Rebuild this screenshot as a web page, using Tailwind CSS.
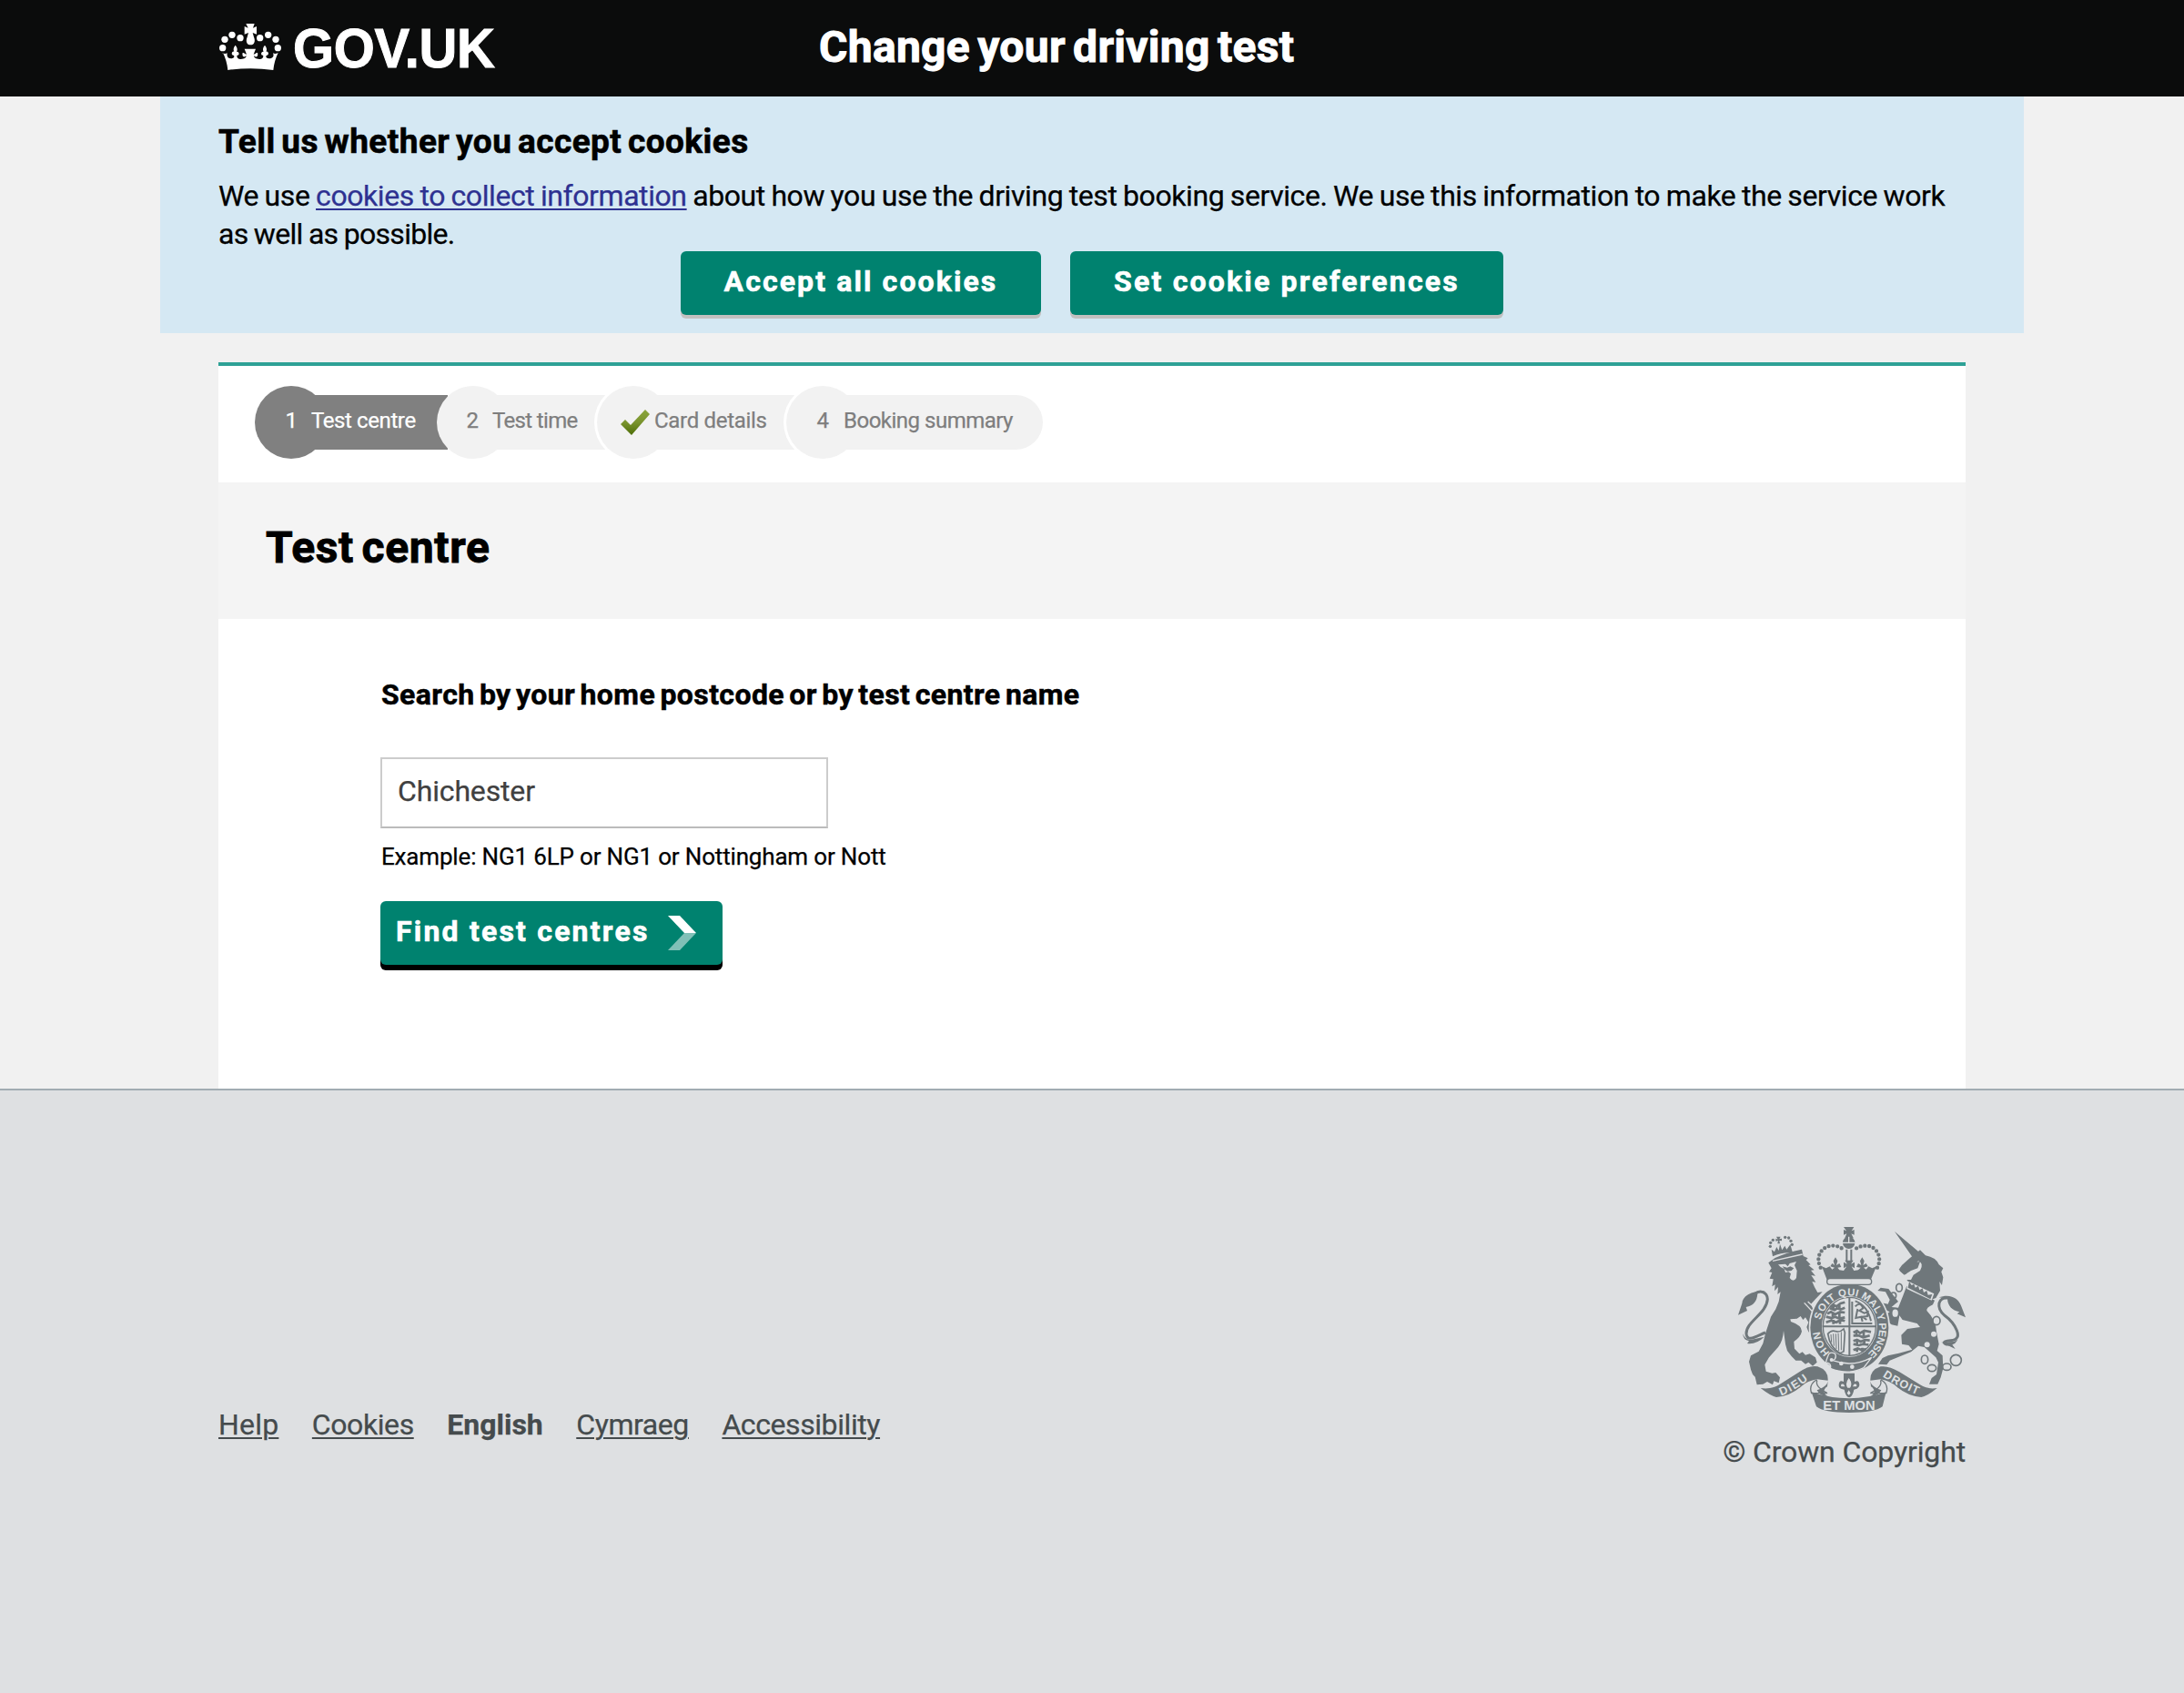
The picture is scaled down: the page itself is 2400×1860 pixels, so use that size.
<!DOCTYPE html>
<html lang="en">
<head>
<meta charset="utf-8">
<title>Change your driving test</title>
<script src="https://cdn.jsdelivr.net/npm/@tailwindcss/browser@4"></script>
</head>
<body class="bg-[#f1f1f1] font-['Roboto',sans-serif] text-black text-[32px] leading-[42px] [-webkit-text-stroke:0.25px]">

<header class="h-[106px] bg-[#0b0c0c] px-60 flex text-white">
  <div class="w-[660px] flex">
    <svg class="w-[70px] h-[51px] mt-[26px]" viewBox="60 78 210 153" fill="#fff">
      <path d="M150 78h28l-5 14 12-5v26l-13-5 4 14c6 14 1 26-11 26s-17-12-11-26l4-14-13 5V87l12 5z" transform="translate(1 0)"/>
      <circle cx="74" cy="158" r="11"/><circle cx="81" cy="130" r="11"/><circle cx="105" cy="115" r="11"/><circle cx="132" cy="125" r="11"/>
      <circle cx="256" cy="158" r="11"/><circle cx="249" cy="130" r="11"/><circle cx="224" cy="115" r="11"/><circle cx="197" cy="125" r="11"/>
      <path d="M72 174q10 6 17 1-3 18 13 18c11 0 12-8 8-11-8 2-8-14 2-12-5-8 0-16 4-21 4 5 9 13 4 21 10-1 10 14 2 12-3 5 2 14 12 13 12 0 18-6 18-11-8 8-15 1-12-10 4-2 9 5 13 5l-7-18h37l-7 18c4 0 9-7 13-5 3 11-4 18-12 10 0 5 6 11 18 11 10 1 15-8 12-13-8 2-8-13 2-12-5-8 0-16 4-21 4 5 9 13 4 21 10-2 10 14 2 12-4 3-3 11 8 11 16 0 16-12 13-18q7 5 17-1-13 26-16 57-74-10-150 0-3-31-16-57z"/>
    </svg>
    <span class="ml-3 origin-left scale-x-[0.935] font-['Liberation_Sans',sans-serif] font-bold text-[62px] leading-[106px] tracking-[-0.3px] whitespace-nowrap [-webkit-text-stroke:1px]">GOV.UK</span>
  </div>
  <span class="font-bold text-[48px] leading-[103px] tracking-[0.3px] [word-spacing:-4px] [-webkit-text-stroke:1px] whitespace-nowrap">Change your driving test</span>
</header>

<section class="mx-[176px] h-[260px] bg-[#d5e8f3] px-16 pt-[29px]">
  <h2 class="font-bold text-[37px] tracking-[0.45px] [word-spacing:-3px] [-webkit-text-stroke:0.6px]">Tell us whether you accept cookies</h2>
  <p class="mt-[17px] -mb-0.5 tracking-[-0.42px] [word-spacing:-0.95px] whitespace-nowrap">We use <a class="text-[#2e3191] underline decoration-2 underline-offset-[3px]">cookies to collect information</a> about how you use the driving test booking service. We use this information to make the service work<br><span class="tracking-[-0.7px]">as well as possible.</span></p>
  <div class="flex justify-center gap-8">
    <button class="w-[396px] h-[70px] pb-1 rounded-md bg-[#00826f] text-white font-bold tracking-[2.1px] [-webkit-text-stroke:0.6px] shadow-[0_4px_0_#c2c0c0]">Accept all cookies</button>
    <button class="w-[476px] h-[70px] pb-1 rounded-md bg-[#00826f] text-white font-bold tracking-[2.2px] [-webkit-text-stroke:0.6px] shadow-[0_4px_0_#c2c0c0]">Set cookie preferences</button>
  </div>
</section>

<main class="mx-60 mt-8 h-[798px] bg-white border-t-4 border-[#2ea196]">
  <ol class="ml-10 pt-[22px] h-32 flex text-2xl tracking-[-0.4px] text-[#7e7e7e]">
    <li class="grid w-[200px] h-20 text-white">
      <div class="col-start-1 row-start-1 size-20 rounded-full bg-[#808080]"></div>
      <div class="col-start-1 row-start-1 self-center ml-10 -mr-3 h-15 bg-[#808080]"></div>
      <div class="col-start-1 row-start-1 flex items-center pb-1"><span class="w-20 text-center">1</span><span class="-ml-[18px] whitespace-nowrap">Test centre</span></div>
    </li>
    <li class="grid w-[176px] h-20">
      <div class="col-start-1 row-start-1 size-20 rounded-full bg-[#f2f2f2]"></div>
      <div class="col-start-1 row-start-1 self-center ml-10 -mr-3 h-15 bg-[#f2f2f2]"></div>
      <div class="col-start-1 row-start-1 flex items-center pb-1"><span class="w-[78px] text-center">2</span><span class="-ml-[17px] tracking-[-0.65px] whitespace-nowrap">Test time</span></div>
    </li>
    <li class="grid w-[208px] h-20">
      <div class="col-start-1 row-start-1 size-20 rounded-full bg-[#f2f2f2] ring-3 ring-white"></div>
      <div class="col-start-1 row-start-1 self-center ml-10 -mr-3 h-15 bg-[#f2f2f2]"></div>
      <div class="col-start-1 row-start-1 flex items-center pb-1">
        <svg class="ml-[26px] mt-1 w-8 h-7" viewBox="0 0 32 28"><defs><linearGradient id="tick" x1="0" y1="0" x2="0" y2="1"><stop offset="0" stop-color="#8ba53c"/><stop offset=".5" stop-color="#7a942e"/><stop offset="1" stop-color="#4d6d06"/></linearGradient></defs><path d="M0 16l5-5 6 6L27 0l5 5-20 23z" fill="url(#tick)"/></svg>
        <span class="ml-[5px] tracking-[-0.3px] whitespace-nowrap">Card details</span></div>
    </li>
    <li class="grid w-[282px] h-20">
      <div class="col-start-1 row-start-1 size-20 rounded-full bg-[#f2f2f2] ring-3 ring-white"></div>
      <div class="col-start-1 row-start-1 self-center ml-10 h-15 bg-[#f2f2f2] rounded-r-full"></div>
      <div class="col-start-1 row-start-1 flex items-center pb-1"><span class="w-20 text-center">4</span><span class="-ml-[17px] tracking-[-0.5px] whitespace-nowrap">Booking summary</span></div>
    </li>
  </ol>
  <div class="h-[150px] bg-[#f4f4f4] pl-[52px]"><h1 class="font-bold text-[48px] leading-[143px] tracking-[0.65px] [word-spacing:-4px] [-webkit-text-stroke:0.9px]">Test centre</h1></div>
  <form class="pl-[178px] pt-[62px]">
    <label class="block font-bold ml-px tracking-[0.4px] [word-spacing:-3px] [-webkit-text-stroke:0.5px] whitespace-nowrap">Search by your home postcode or by test centre name</label>
    <div class="mt-12 w-[492px] h-[78px] border-2 border-[#ccc] border-b-[#bbb] bg-white pl-[17px] pt-[14px] tracking-[-0.15px] text-[#404040]">Chichester</div>
    <p class="mt-2.5 ml-px text-[26px] tracking-[-0.17px] whitespace-nowrap">Example: NG1 6LP or NG1 or Nottingham or Nott</p>
    <button class="mt-7 w-[376px] h-[70px] pb-1 pl-[17px] rounded-md bg-[#00826f] text-white font-bold tracking-[2.2px] [-webkit-text-stroke:0.6px] shadow-[0_6px_0_#000] flex items-center">Find test centres
      <svg class="ml-5 mt-1 w-[31px] h-[38px]" viewBox="0 0 31 38"><path d="M0 0h13l18 19H18z" fill="#fff"/><path d="M0 38h13l18-19H18z" fill="#80c0b7"/></svg>
    </button>
  </form>
</main>

<footer class="h-[664px] border-t-2 border-[#a1acb2] bg-[#dee0e2] px-60 flex justify-between text-[#454b4d]">
  <nav class="pt-[346px] flex gap-[36.5px] tracking-[-0.42px] whitespace-nowrap">
    <a class="tracking-[0.2px] underline decoration-2 underline-offset-[3px]">Help</a>
    <a class="underline decoration-2 underline-offset-[3px]">Cookies</a>
    <span class="font-bold tracking-normal">English</span>
    <a class="underline decoration-2 underline-offset-[3px]">Cymraeg</a>
    <a class="underline decoration-2 underline-offset-[3px]">Accessibility</a>
  </nav>
  <div class="pt-[150px] flex flex-col items-end">
    <svg class="w-[250px] h-[204px]" viewBox="90 54 750 612" fill="#6f777b">
      <!-- lion -->
      <path d="M204 151L200 128 210 136 217 120 224 132 228 110 235 130 244 116 250 128 262 112 270 139Q236 136 204 151z"/>
      <path d="M216 86h14l-4 8 8-2v8l-8-1 2 10h-8l2-10-8 2v-9l7 3z"/>
      <g><circle cx="196" cy="118" r="5"/><circle cx="197" cy="106" r="5"/><circle cx="205" cy="97" r="5"/><circle cx="264" cy="100" r="5"/><circle cx="257" cy="90" r="5"/><circle cx="245" cy="88" r="5"/><circle cx="268" cy="112" r="5"/></g>
      <path d="M190 172L212 156Q250 138 300 128L305 150 320 157 314 163 329 178 322 180 341 196 330 197 345 215 331 213 346 236 334 234 342 252 352 270 368 268 345 292 330 308 344 342 358 365 366 400 356 412 340 410 322 400 316 384 322 368 312 352 304 360 296 348 284 356 262 358 264 366Q300 378 300 398 296 416 274 432L276 455 292 472 302 466 312 476 326 472 345 484 350 500 336 512 322 500 312 506 298 494 280 494 266 480 252 462 246 440 240 396Q238 430 222 450L192 484 178 508 182 530 202 536 214 534 228 550 224 568 208 562 204 574 186 564 172 572 152 574 146 548 138 540 132 524 126 498 132 478 158 464 172 438 180 405 190 375 198 350 214 325 224 300 230 268 220 276 222 252 210 265 212 244 202 250 206 226 194 224 202 204 192 202 200 190z"/>
      <path d="M222 178l24-2 8 8 6-10 22-6-6 12 8 18-2 24q-10 16-22 0l4-14-8-6-10 2-4-12-12-6z" fill="#dee0e2"/>
      <path d="M236 184l16 4 10-4 12 6-8 8-14 2-8-6z"/>
      <path d="M204 166l98-22" stroke="#dee0e2" stroke-width="4"/>
      <path d="M308 304l30 32 18 36M320 300l28 26" fill="none" stroke="#dee0e2" stroke-width="4"/>
      <path d="M180 402C150 414 120 436 117 406 116 366 184 340 187 292 186 266 160 262 146 274" fill="none" stroke="#6f777b" stroke-width="9"/>
      <path d="M180 264C130 264 104 284 103 306L90 344 120 330 116 318Q152 312 154 274zM106 406Q112 426 132 426L176 416Q150 442 120 438L126 430Q106 426 106 406z"/>
      <!-- crown -->
      <path d="M438 54h34l-8 13 9-4v17l-10-4 7 14h-28l6-14-10 4V63l9 4z"/>
      <circle cx="455" cy="106" r="20"/>
      <path d="M434 106h42M455 86v20" stroke="#dee0e2" stroke-width="4"/>
      <g fill="none" stroke="#6f777b" stroke-width="13" stroke-linecap="round" stroke-dasharray="0 14.5"><path d="M362 188C340 145 375 112 405 116 425 118 434 124 438 132"/><path d="M549 188C570 145 537 112 507 116 487 118 478 124 473 132"/></g>
      <path d="M445 128h6v38h-6zM460 128h6v38h-6z"/>
      <path d="M366 184L380 190 392 184 400 194 408 188 394 184 400 174 408 180 404 166 411 154 418 166 414 180 424 174 430 186 418 188 424 196 438 198 448 184 438 190V170L450 176 442 164H470L462 176 474 170V190L464 184 472 198 486 196 494 188 480 186 486 174 496 180 492 166 499 154 506 166 502 180 512 174 518 184 504 188 512 194 520 184 532 190 546 184 524 236Q510 222 455 222 400 222 386 236z"/>
      <!-- unicorn -->
      <path d="M606 69L688 138 664 152zM664 150L690 130 708 148Q742 154 752 178L766 190 760 202 766 220 762 246 754 234 756 264 742 288 720 296 660 258 648 232 640 204 656 210 668 200 660 196 634 208 620 194 630 180 650 162z"/>
      <path d="M640 212L684 166Q704 174 690 198L668 212 660 228 642 228z" fill="#dee0e2"/><path d="M622 198l24-10 18-16 26-4-8 22-22 8-22 14z"/>
      <path d="M646 248L738 296 732 310Q710 320 712 330 742 360 744 400L752 440 746 462 764 478 766 520 758 550 748 572 720 572 728 552 744 540 750 500 742 484 704 450 684 446 660 466 590 494 580 508 552 506 566 486 584 478 620 470 664 458 652 444 630 440 628 410 648 390 690 384 680 372 632 360 622 346 616 380 596 376 578 362 574 344 590 334 560 320 556 302 584 308 590 294 576 268 550 264 560 254 586 258 602 280 618 300 610 306 596 318 618 320 634 280z"/>
      <path d="M648 232l88 42-8 22-82-38z" fill="#dee0e2"/>
      <path d="M650 254l4-20 8 12 8-4 4 12 10-6 4 14 10-6 4 14 10-6 4 14 14-2-6 16z"/>
      <path d="M790 440C770 446 756 430 790 428 840 426 802 368 770 345 742 320 748 284 782 288" fill="none" stroke="#6f777b" stroke-width="9"/>
      <path d="M752 286C790 272 818 290 826 316L840 352 812 340 820 334Q782 326 780 290zM818 404Q820 428 800 432L760 434 806 456 796 442Q816 436 818 404z"/>
      <g fill="none" stroke="#6f777b" stroke-width="5"><circle cx="808" cy="493" r="18"/><ellipse cx="778" cy="515" rx="14" ry="11"/><ellipse cx="729" cy="519" rx="14" ry="11"/><ellipse cx="705" cy="491" rx="11" ry="14"/><ellipse cx="744" cy="363" rx="12" ry="14" fill="#dee0e2"/><ellipse cx="608" cy="338" rx="12" ry="15" fill="#dee0e2"/><ellipse cx="621" cy="254" rx="10" ry="13"/><ellipse cx="602" cy="280" rx="9" ry="10"/></g>
      <circle cx="735" cy="407" r="9" fill="#dee0e2"/><circle cx="713" cy="442" r="9" fill="#dee0e2"/>
      <!-- garter and shield -->
      <ellipse cx="457" cy="386" rx="134" ry="148" fill="#dee0e2"/>
      <ellipse cx="457" cy="386" rx="129" ry="144"/>
      <rect x="383" y="224" width="147" height="20" rx="10" fill="#dee0e2" stroke="#6f777b" stroke-width="4"/>
      <ellipse cx="457" cy="382" rx="91" ry="100" fill="#dee0e2"/>
      <ellipse cx="457" cy="382" rx="87" ry="96" fill="none" stroke="#6f777b" stroke-width="4"/>
      <path d="M368 382H546M457 285V480" stroke="#6f777b" stroke-width="6"/>
      <g fill="none" stroke="#6f777b" stroke-width="8"><path d="M396 318l8-8 10 6 14-10 14-4M392 322l16 6 8-6 12 4 14-6M384 340l12-6 14 8 16-8 16 2M380 350l18 4 12-4 14 6 18-4M380 368l18-6 16 6 14-8 14 4M404 310v14M424 308v16M402 336v16M424 334v18M404 360v14M426 360v14"/><path d="M470 402l12-6 10 8 14-8 22 4M470 412l18 0 14 6 22-6M470 430l12-4 12 6 14-6 16 2M470 440l18 4 14-4 18 2M470 460l14-6 14 6 14-4M480 398v16M504 398v18M482 428v16M506 428v16M482 454v12M500 452v14"/></g>
      <path d="M466 300v72h66M476 298q40 14 52 66M476 316q18-18 26 6l-12 8 16 8 12-4-2 14-16 2 14 10M484 324l-6 30 18-4 4 16" fill="none" stroke="#6f777b" stroke-width="6"/>
      <path d="M386 406q12-14 26-8 14 4 26-8l4 12-4 62-12 6Q392 450 386 406z" fill="none" stroke="#6f777b" stroke-width="5"/>
      <path d="M396 408l2 26M404 406l2 40M412 406l2 50M420 404l2 58M430 400v60" stroke="#6f777b" stroke-width="3"/>
      <defs><path id="garter" d="M400 474A98 107 0 1 1 514 474"/></defs>
      <g fill="#dee0e2" class="font-['Liberation_Sans',sans-serif] font-bold" font-size="34">
        <text><textPath href="#garter" startOffset="10" textLength="78">HON</textPath></text>
        <text><textPath href="#garter" startOffset="126" textLength="88">SOIT</textPath></text>
        <text><textPath href="#garter" startOffset="226" textLength="62">QUI</textPath></text>
        <text><textPath href="#garter" startOffset="298" textLength="76">MAL</textPath></text>
        <text><textPath href="#garter" startOffset="376">Y</textPath></text>
        <text><textPath href="#garter" startOffset="405" textLength="112">PENSE</textPath></text>
      </g>
      <path d="M386 480q4-18 24-8 6 16-8 22 66 24 128-10l-26 34q-50 26-110 2 4-14-8-18-12 8 0-22z" stroke="#dee0e2" stroke-width="4"/>
      <circle cx="430" cy="504" r="7" fill="#dee0e2"/><circle cx="466" cy="515" r="7" fill="#dee0e2"/><circle cx="398" cy="492" r="6" fill="#dee0e2"/>
      <!-- motto ribbon -->
      <path d="M164 585Q196 590 222 576L292 532Q326 508 352 514 388 526 386 560L350 556Q318 562 300 578 262 612 216 615 196 610 164 585z"/>
      <path d="M746 585Q714 590 690 574L622 532Q586 510 560 514 524 526 526 560L560 556Q592 562 612 580 650 612 694 615 716 610 746 585z"/>
      <path d="M348 558q-26 16-16 44h52q-40-22-34-40zM562 558q26 16 16 44h-52q40-22 34-40z" fill="#dee0e2" stroke="#6f777b" stroke-width="4"/>
      <path d="M332 598Q456 640 578 598L566 646Q540 666 456 666 372 666 348 646z"/>
      <path d="M386 562q-2 18-36 30 10 20 34 20-22-18 0-32zM526 562q2 18 36 30-10 20-34 20 22-18 0-32z"/>
      <defs><path id="dieu" d="M232 610Q282 592 336 546"/><path id="droit" d="M566 547Q618 582 690 610"/></defs>
      <g fill="#dee0e2" class="font-['Liberation_Sans',sans-serif] font-bold" font-size="38">
        <text><textPath href="#dieu" textLength="104">DIEU</textPath></text>
        <text><textPath href="#droit" textLength="130">DROIT</textPath></text>
        <text x="370" y="656" font-size="42" textLength="172" lengthAdjust="spacingAndGlyphs">ET MON</text>
      </g>
      <path d="M438 536h36v28q16-8 16 12-2 12-18 14-4 22-16 26-12-4-16-26-18-2-18-14 0-20 16-12z"/>
      <path d="M455 552q14 18 4 32h-8q-10-14 4-32zM438 572q-12-2-8 8h12zM472 572q12-2 8 8h-12zM455 592l6 10-6 6-6-6z" fill="#dee0e2"/>
    </svg>
    <p class="mt-[22px] tracking-[-0.13px] whitespace-nowrap">© Crown Copyright</p>
  </div>
</footer>
</body>
</html>
